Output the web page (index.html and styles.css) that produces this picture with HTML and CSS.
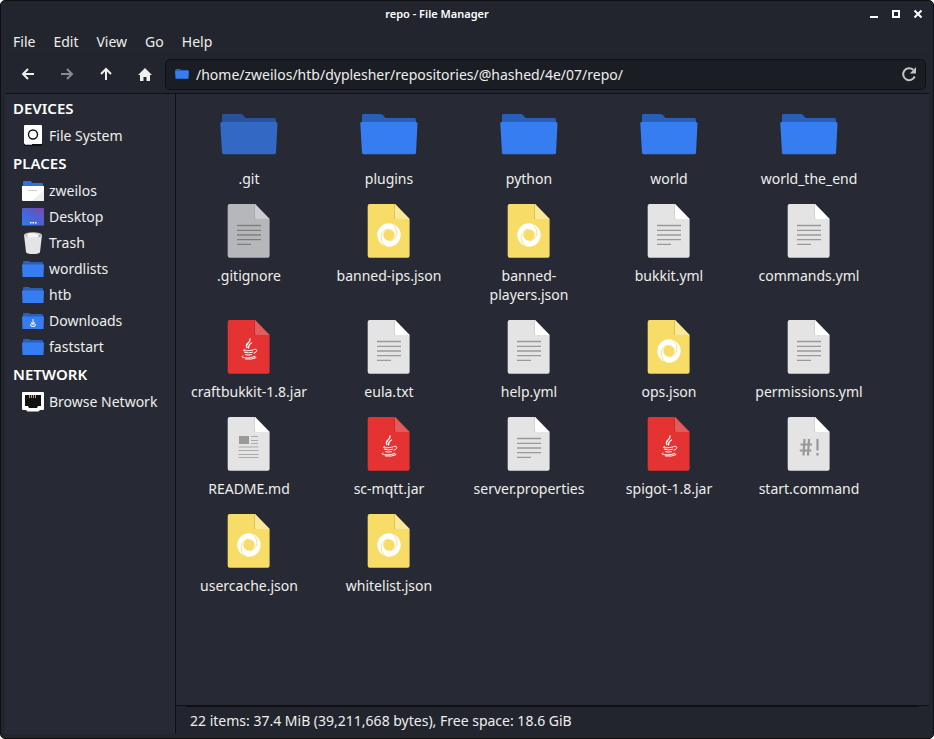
FILE: index.html
```html
<!DOCTYPE html>
<html lang="en">
<head>
<meta charset="utf-8">
<title>repo - File Manager</title>
<link rel="stylesheet" href="styles.css">
</head>
<body>
<svg class="sprite" aria-hidden="true">
  <defs>
    <linearGradient id="desk" x1="0" y1="1" x2="1" y2="0">
      <stop offset="0" stop-color="#2f7df5"/><stop offset=".5" stop-color="#4a62d4"/><stop offset="1" stop-color="#8048b0"/>
    </linearGradient>
  </defs>
  <symbol id="folder" viewBox="0 0 64 64">
    <path fill="#2a5fb8" d="M5 24V13.500q0-1.500 1.500-1.500h17q1.500 0 2.500 1l2.500 3h28.500q2 0 2 2v6z"/>
    <path fill="#377df2" d="M4.500 20h54.500q1.500 0 1.500 1.500L59 50.800q0 1.400-1.500 1.400H6.500Q5 52.200 5 50.800L3.300 21.500Q3.300 20 4.500 20z"/>
  </symbol>
  <symbol id="sheet" viewBox="0 0 64 64">
    <path d="M12.700 5H38l14.600 15v36.700q0 2-2 2H12.700q-2 0-2-2V7q0-2 2-2z"/>
  </symbol>
  <symbol id="page" viewBox="0 0 64 64">
    <use href="#sheet" fill="#e4e4e4"/>
    <path fill="#d4d4d4" d="M37 5h1v15h-1z"/>
    <path fill="#fff" d="M38 5l14.600 15H40q-2 0-2-2z"/>
  </symbol>
  <symbol id="text" viewBox="0 0 64 64">
    <use href="#page"/>
    <path stroke="#999" stroke-width="1.300" d="M20 26.500h24M20 31.300h24M20 36h24M20 40.600h24M20 45.400h14"/>
  </symbol>
  <symbol id="json" viewBox="0 0 64 64">
    <use href="#sheet" fill="#f7dc67"/>
    <path fill="#dcc45c" d="M37 5h1v15h-1z"/>
    <path fill="#fbe99a" d="M38 5l14.600 15H40q-2 0-2-2z"/>
    <circle cx="32" cy="36" r="8.700" fill="none" stroke="#fff" stroke-width="6"/>
    <path fill="none" stroke="#f7dc67" stroke-width=".8" d="M35 24q7 7 4 13.500-2 4-6.500 4.500M29 48q-7-7-4-13.500 2-4 6.500-4.500"/>
  </symbol>
  <symbol id="jar" viewBox="0 0 64 64">
    <use href="#sheet" fill="#e53232"/>
    <path fill="#c92e2e" d="M37 5h1v15h-1z"/>
    <path fill="#e35b5d" d="M38 5l14.600 15H40q-2 0-2-2z"/>
    <g fill="none" stroke="#fff" stroke-width="1" stroke-linecap="round">
      <path stroke-width="1.300" d="M33 24c1 4-6 4.500-3 8.500M34.500 28c-4 2-2 2.500-3 5"/>
      <path d="M28 34.500c-5 1.500 1 1.800 8 .5M27.500 37.300q4 1.300 8 0M28.500 39.700q3 1 6 0M37 34.300c4.500-.5 3 3.200 0 3.900M26 41c-5 1.800 7 3 12 .3M28.500 44q7 .8 10.500-1.300"/>
    </g>
  </symbol>
  <symbol id="readme" viewBox="0 0 64 64">
    <use href="#page"/>
    <path fill="#999" d="M22 24h10v8H22z"/>
    <path stroke="#aaa" stroke-width="1.200" d="M34 24.500h7M34 28.500h7M34 31.500h7M21.500 35h20M21.500 38.500h20M21.500 42.500h20M21.500 45.500h20"/>
  </symbol>
  <symbol id="shell" viewBox="0 0 64 64">
    <use href="#page"/>
    <path fill="none" stroke="#999" stroke-width="2.200" d="M27.500 27l-1 16.500M32 27l-1 16.500M23.500 32.500H35M22.800 38.500h11.500M40.500 27v11.500M40.500 41v2.500"/>
  </symbol>
</svg>

<div class="window">
  <header class="titlebar">
    <h1>repo - File Manager</h1>
    <div class="controls">
      <button aria-label="Minimize"><svg viewBox="0 0 10 10"><path d="M1 8h8" stroke="#fff" stroke-width="2"/></svg></button>
      <button aria-label="Maximize"><svg viewBox="0 0 10 10"><path d="M2 2h6v6H2z" fill="none" stroke="#fff" stroke-width="2"/></svg></button>
      <button aria-label="Close"><svg viewBox="0 0 10 10"><path d="M1.500 1.500l7 7M8.500 1.500l-7 7" stroke="#fff" stroke-width="2"/></svg></button>
    </div>
  </header>

  <nav class="menubar">
    <button>File</button><button>Edit</button><button>View</button><button>Go</button><button>Help</button>
  </nav>

  <div class="toolbar">
    <button aria-label="Back"><svg viewBox="0 0 16 16"><path d="M14 8H3M8 3L3 8l5 5"/></svg></button>
    <button aria-label="Forward" disabled><svg viewBox="0 0 16 16"><path d="M2 8h11M8 3l5 5-5 5"/></svg></button>
    <button aria-label="Up"><svg viewBox="0 0 16 16"><path d="M8 14V3M3 8l5-5 5 5"/></svg></button>
    <button aria-label="Home"><svg viewBox="0 0 16 16"><path class="solid" d="M8 2L1 9h2v6h3.500v-4h3v4H13V9h2z"/></svg></button>
    <div class="location">
      <svg class="location-icon" viewBox="3 12 58 41" preserveAspectRatio="none"><use href="#folder" width="64" height="64"/></svg>
      <input type="text" aria-label="Location" value="/home/zweilos/htb/dyplesher/repositories/@hashed/4e/07/repo/">
      <button aria-label="Reload"><svg viewBox="0 0 16 16"><path d="M13.700 10.500A6 6 0 1 1 12.300 3.800"/><path class="solid" d="M15 1v6.500H8.800z"/></svg></button>
    </div>
  </div>

  <div class="main">
    <aside class="sidebar">
      <h2>DEVICES</h2>
      <ul>
        <li><a href="#"><svg viewBox="0 0 24 24"><rect x="3" y="2" width="18" height="19" rx="1" fill="#fff"/><path fill="#111" d="M3 21h18v1.500q0 .5-.5.500h-17q-.5 0-.5-.5z"/><path stroke="#bbb" d="M4 21.500h7"/><circle cx="12" cy="11.500" r="4.500" fill="none" stroke="#111" stroke-width="1.400"/></svg>File System</a></li>
      </ul>
      <h2>PLACES</h2>
      <ul>
        <li><a href="#"><svg viewBox="0 0 24 24"><path fill="#2f72dd" d="M2 10V4q0-1 1-1h7l1 2h10q1 0 1 1v4z"/><path fill="#fff" d="M1 8h22v14q0 1-1 1H2q-1 0-1-1z"/><path fill="#eee" d="M23 12v10q0 1-1 1H11z"/><path stroke="#ccc" d="M7 12.500h9"/></svg>zweilos</a></li>
        <li><a href="#"><svg viewBox="0 0 24 24"><rect x="1" y="4" width="22" height="18" rx="1" fill="url(#desk)"/><path stroke="#274f9f" d="M1 21.500h22"/><path fill="#fff" d="M9 18h1.500v1.500H9zM11.500 18H13v1.500h-1.500zM14 18h1.500v1.500H14z"/></svg>Desktop</a></li>
        <li><a href="#"><svg viewBox="0 0 24 24"><path fill="#e4e4e4" d="M3 5h18l-2 17q-.5 2-7 2t-7-2z"/><ellipse cx="12" cy="5" rx="9" ry="2.800" fill="#ccc"/><path fill="#f7f7f7" d="M5 5l4-2 5 .5 4 1.500-2 2.500H8z"/><path fill="#e5bd62" d="M4.500 5l2-1.500L7 6z"/><path fill="#39a7b5" d="M18 5l2 .5-1.500 1.500z"/></svg>Trash</a></li>
        <li><a href="#"><svg viewBox="0 0 24 24"><use href="#small-folder"/></svg>wordlists</a></li>
        <li><a href="#"><svg viewBox="0 0 24 24"><use href="#small-folder"/></svg>htb</a></li>
        <li><a href="#"><svg viewBox="0 0 24 24"><use href="#small-folder"/><path fill="none" stroke="#d8e6ff" stroke-width="1.200" d="M12 11v6M10 14.500l2 2 2-2M9.500 16q0 2.500 2.500 2.500t2.500-2.500"/></svg>Downloads</a></li>
        <li><a href="#"><svg viewBox="0 0 24 24"><g id="small-folder"><path fill="#2a5fb8" d="M2 10V6q0-1 1-1h5l1.500 1H21q1 0 1 1v3z"/><path fill="#377df2" d="M1 8.500h22L22.500 21H1.500z"/></g></svg>faststart</a></li>
      </ul>
      <h2>NETWORK</h2>
      <ul>
        <li><a href="#"><svg viewBox="0 0 24 24"><path fill="#fff" d="M2 3h20q1 0 1 1v16q0 1-1 1h-3l-1.500 1.500h-11L5 21H2q-1 0-1-1V4q0-1 1-1z"/><path fill="#111" d="M4 6h16v11h-3l-1 2H8l-1-2H4z"/><path stroke="#c5a24a" d="M8.500 6v3M10.500 6v3M12.500 6v3M14.500 6v3"/></svg>Browse Network</a></li>
      </ul>
    </aside>

    <section class="content">
      <ul class="files">
        <li class="hidden"><a href="#"><svg><use href="#folder"/></svg><span>.git</span></a></li>
        <li><a href="#"><svg><use href="#folder"/></svg><span>plugins</span></a></li>
        <li><a href="#"><svg><use href="#folder"/></svg><span>python</span></a></li>
        <li><a href="#"><svg><use href="#folder"/></svg><span>world</span></a></li>
        <li><a href="#"><svg><use href="#folder"/></svg><span>world_the_end</span></a></li>
        <li class="hidden"><a href="#"><svg><use href="#text"/></svg><span>.gitignore</span></a></li>
        <li><a href="#"><svg><use href="#json"/></svg><span>banned-ips.json</span></a></li>
        <li><a href="#"><svg><use href="#json"/></svg><span>banned-players.json</span></a></li>
        <li><a href="#"><svg><use href="#text"/></svg><span>bukkit.yml</span></a></li>
        <li><a href="#"><svg><use href="#text"/></svg><span>commands.yml</span></a></li>
        <li><a href="#"><svg><use href="#jar"/></svg><span>craftbukkit-1.8.jar</span></a></li>
        <li><a href="#"><svg><use href="#text"/></svg><span>eula.txt</span></a></li>
        <li><a href="#"><svg><use href="#text"/></svg><span>help.yml</span></a></li>
        <li><a href="#"><svg><use href="#json"/></svg><span>ops.json</span></a></li>
        <li><a href="#"><svg><use href="#text"/></svg><span>permissions.yml</span></a></li>
        <li><a href="#"><svg><use href="#readme"/></svg><span>README.md</span></a></li>
        <li><a href="#"><svg><use href="#jar"/></svg><span>sc-mqtt.jar</span></a></li>
        <li><a href="#"><svg><use href="#text"/></svg><span>server.properties</span></a></li>
        <li><a href="#"><svg><use href="#jar"/></svg><span>spigot-1.8.jar</span></a></li>
        <li><a href="#"><svg><use href="#shell"/></svg><span>start.command</span></a></li>
        <li><a href="#"><svg><use href="#json"/></svg><span>usercache.json</span></a></li>
        <li><a href="#"><svg><use href="#json"/></svg><span>whitelist.json</span></a></li>
      </ul>
      <footer class="statusbar">22 items: 37.4 MiB (39,211,668 bytes), Free space: 18.6 GiB</footer>
    </section>
  </div>
</div>
</body>
</html>
```
FILE: styles.css
```css
* {
  box-sizing: border-box;
}

body {
  margin: 0;
  background: #fff;
  color: #eeeeec;
  font: 14px/19px "Noto Sans", sans-serif;
}

.sprite {
  position: absolute;
  width: 0;
  height: 0;
}

ul {
  list-style: none;
  margin: 0;
  padding: 0;
}

a {
  color: inherit;
  text-decoration: none;
}

button {
  border: 0;
  padding: 0;
  background: none;
  color: inherit;
  font: inherit;
}

svg {
  display: block;
  flex: none;
}

.window {
  display: flex;
  flex-direction: column;
  min-height: 100vh;
  padding: 0 4px 4px;
  border: 1px solid #0e1014;
  border-radius: 5px;
  background: #22252e;
}

.titlebar {
  display: flex;
  align-items: center;
  height: 26px;
}

.titlebar h1 {
  flex: 1;
  margin: 0;
  color: #fff;
  font-size: 11px;
  font-weight: 600;
  line-height: 18px;
  text-align: center;
}

.controls {
  display: flex;
  gap: 12px;
  padding-right: 6px;
}

.controls svg {
  width: 10px;
  height: 10px;
}

.menubar {
  display: flex;
  gap: 18px;
  height: 28px;
  padding: 2px 8px 0;
  border-bottom: 1px solid #1f222a;
}

.toolbar {
  display: flex;
  align-items: center;
  height: 39px;
  padding: 0 3px;
  border-bottom: 1px solid #0e1014;
}

.toolbar button {
  display: grid;
  place-items: center;
  width: 39px;
  height: 30px;
}

.toolbar button svg {
  width: 16px;
  height: 16px;
  fill: none;
  stroke: #eeeeec;
  stroke-width: 2;
}

.toolbar .solid {
  fill: #eeeeec;
  stroke: none;
}

.toolbar button:disabled {
  opacity: 0.5;
}

.location {
  display: flex;
  flex: 1;
  align-items: center;
  height: 31px;
  margin-left: 1px;
  padding-left: 9px;
  border: 1px solid #0e1014;
  border-radius: 5px;
  background: #1a1d24;
}

.location-icon {
  width: 14px;
  height: 10px;
}

.location input {
  flex: 1;
  min-width: 0;
  margin-left: 7px;
  padding: 0;
  border: 0;
  outline: 0;
  background: none;
  color: inherit;
  font: inherit;
}

.toolbar .location button {
  width: 32px;
  opacity: 0.8;
}

.main {
  display: flex;
  flex: 1;
  background: #272a34;
}

.sidebar {
  width: 171px;
  flex: none;
  border-right: 1px solid #0e1014;
}

.sidebar h2 {
  margin: 0;
  padding: 0 8px;
  color: #fff;
  font-size: 15px;
  font-weight: 600;
  line-height: 28px;
}

.sidebar ul {
  padding-bottom: 1px;
}

.sidebar a {
  display: flex;
  align-items: center;
  gap: 4px;
  height: 26px;
  padding-left: 16px;
}

.sidebar svg {
  width: 24px;
  height: 24px;
}

.content {
  display: flex;
  flex: 1;
  flex-direction: column;
  min-width: 0;
}

.files {
  display: grid;
  flex: 1;
  grid-template-columns: repeat(auto-fill, 140px);
  align-content: start;
  row-gap: 11px;
  padding: 8px 3px;
}

.files a {
  display: flex;
  flex-direction: column;
  align-items: center;
  gap: 3px;
  padding: 0 8px;
  text-align: center;
}

.files svg {
  width: 64px;
  height: 64px;
}

.hidden svg {
  opacity: 0.76;
}

.statusbar {
  padding: 0 14px 4px;
  border-top: 1px solid #0e1014;
  background: #22252e;
}

.statusbar::before {
  content: "";
  display: block;
  height: 1px;
  margin: 0 -4px 4px;
  background: #0e1014;
}
```
